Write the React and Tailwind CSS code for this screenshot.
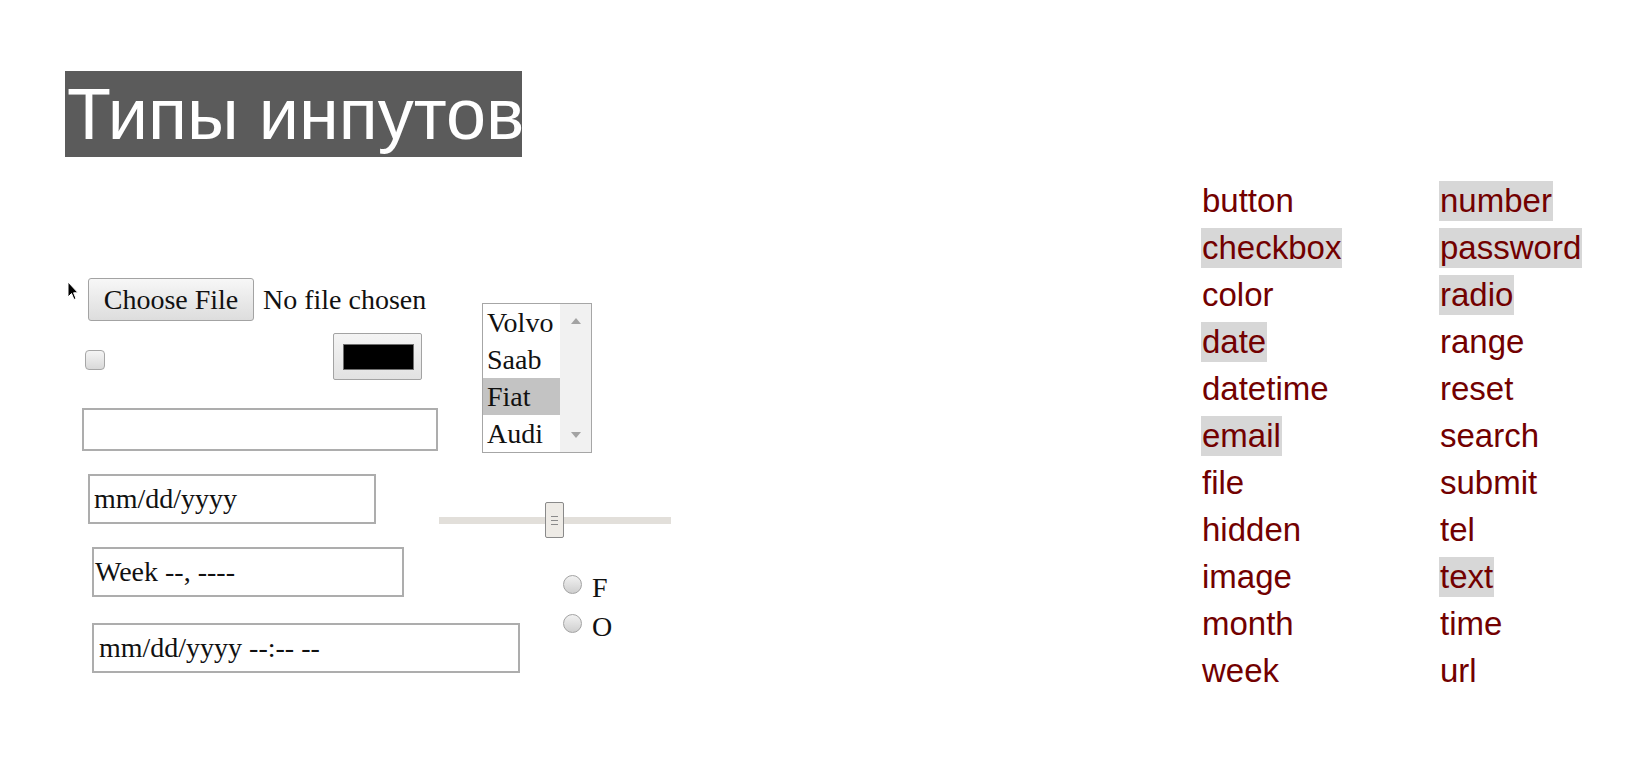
const serif = { fontFamily: '"Liberation Serif", "Times New Roman", serif' };

const leftTypes = [
  { name: "button" },
  { name: "checkbox", on: true },
  { name: "color" },
  { name: "date", on: true },
  { name: "datetime" },
  { name: "email", on: true },
  { name: "file" },
  { name: "hidden" },
  { name: "image" },
  { name: "month" },
  { name: "week" },
];

const rightTypes = [
  { name: "number", on: true },
  { name: "password", on: true },
  { name: "radio", on: true },
  { name: "range" },
  { name: "reset" },
  { name: "search" },
  { name: "submit" },
  { name: "tel" },
  { name: "text", on: true },
  { name: "time" },
  { name: "url" },
];

function TypeList({ items }) {
  return (
    <ul className="flex flex-col">
      {items.map((t) => (
        <li key={t.name} className="h-[47px]">
          <span
            className={
              "inline-block px-[1px] leading-[40px] " + (t.on ? "bg-[#d7d7d7]" : "")
            }
          >
            {t.name}
          </span>
        </li>
      ))}
    </ul>
  );
}

function Cursor() {
  return (
    <svg
      className="absolute left-[-15px] top-[3px]"
      width="12"
      height="20"
      viewBox="0 0 12 20"
    >
      <path
        d="M1 1 L1 16 L4.5 12.5 L7 18.5 L9 17.6 L6.6 11.8 L11 11.8 Z"
        fill="#000"
        stroke="#fff"
        strokeWidth="1"
      />
    </svg>
  );
}

function FakeDate({ text, className, pad = "pl-[4px]" }) {
  return (
    <div
      className={
        "flex items-center border-2 border-[#adadad] bg-white text-[28px] text-[#111] " +
        pad +
        " " +
        className
      }
      style={serif}
    >
      {text}
    </div>
  );
}

function Radio({ label }) {
  return (
    <div className="flex items-center h-[39px]">
      <span className="w-[19px] h-[19px] rounded-full border border-[#a3a3a3] bg-linear-to-b from-[#f2f2f2] to-[#cfcfcf]" />
      <span className="ml-[10px] text-[28px] text-[#111] leading-none pt-[6px]" style={serif}>
        {label}
      </span>
    </div>
  );
}

export default function App() {
  return (
    <div className="w-[1627px] h-[762px] bg-white overflow-hidden flex">
      {/* left: title + inputs */}
      <div className="w-[1201px] shrink-0 pt-[71px]">
        <div
          className="ml-[65px] w-[457px] h-[86px] bg-[#5b5b5b] text-white text-[72px] leading-[86px] pl-[2px] whitespace-nowrap"
          style={{ fontFamily: '"Liberation Sans", Arial, sans-serif' }}
        >
          Типы инпутов
        </div>

        {/* first block */}
        <div className="mt-[121px] flex items-start">
          <div className="ml-[82px] flex flex-col relative">
            <Cursor />
            <div className="flex items-center ml-[6px]">
              <button
                className="w-[166px] h-[43px] border border-[#a3a3a3] rounded-[3px] bg-linear-to-b from-[#f7f7f7] to-[#dddddd] text-[28px] text-[#111]"
                style={serif}
              >
                Choose File
              </button>
              <span className="ml-[9px] text-[28px] text-[#111]" style={serif}>
                No file chosen
              </span>
            </div>

            <div className="flex items-center mt-[12px]">
              <span className="ml-[3px] mt-[6px] w-[20px] h-[20px] rounded-[4px] border border-[#a6a6a6] bg-linear-to-b from-[#f5f5f5] to-[#d9d9d9]" />
              <div className="ml-[228px] w-[89px] h-[47px] border border-[#a3a3a3] rounded-[2px] bg-linear-to-b from-[#f4f4f4] to-[#e2e2e2] pl-[9px] pt-[10px]">
                <div className="w-[71px] h-[26px] bg-black border border-[#6f6f6f]" />
              </div>
            </div>

            <div className="mt-[28px] w-[356px] h-[43px] border-2 border-[#adadad] bg-white" />
          </div>

          {/* listbox */}
          <div
            className="ml-[44px] mt-[25px] w-[110px] h-[150px] border border-[#a6a6a6] flex text-[28px] text-[#111]"
            style={serif}
          >
            <div className="flex-1 flex flex-col">
              {["Volvo", "Saab", "Fiat", "Audi"].map((o) => (
                <div
                  key={o}
                  className={
                    "h-[37px] leading-[37px] pl-[4px] " + (o === "Fiat" ? "bg-[#c3c3c3]" : "")
                  }
                >
                  {o}
                </div>
              ))}
            </div>
            <div className="w-[31px] bg-[#f1f1f1] flex flex-col items-center justify-between py-[14px]">
              <svg width="10" height="6" viewBox="0 0 10 6">
                <path d="M0 6 L5 0 L10 6 Z" fill="#a3a3a3" />
              </svg>
              <svg width="10" height="6" viewBox="0 0 10 6">
                <path d="M0 0 L5 6 L10 0 Z" fill="#a3a3a3" />
              </svg>
            </div>
          </div>
        </div>

        {/* date + range */}
        <div className="mt-[21px] flex items-start">
          <FakeDate text="mm/dd/yyyy" className="ml-[88px] w-[288px] h-[50px]" />
          <div className="ml-[63px] w-[232px] h-[64px] flex items-center relative">
            <div className="w-full h-[7px] bg-[#e2dfda] mt-[28px]" />
            <div className="absolute left-[106px] top-[28px] w-[19px] h-[36px] border border-[#8a8a8a] rounded-[2px] bg-[#eeebe6] flex flex-col items-center justify-center gap-[3px]">
              <span className="w-[7px] h-[1px] bg-[#8a8a8a]" />
              <span className="w-[7px] h-[1px] bg-[#8a8a8a]" />
              <span className="w-[7px] h-[1px] bg-[#8a8a8a]" />
            </div>
          </div>
        </div>

        {/* week + datetime + radios */}
        <div className="mt-[9px] flex items-start">
          <div className="ml-[92px] flex flex-col">
            <FakeDate text="Week --, ----" pad="pl-[1px]" className="w-[312px] h-[50px]" />
            <FakeDate text="mm/dd/yyyy --:-- --" pad="pl-[5px]" className="mt-[26px] w-[428px] h-[50px]" />
          </div>
          <div className="ml-[43px] mt-[18px] flex flex-col">
            <Radio label="F" />
            <Radio label="O" />
          </div>
        </div>
      </div>

      {/* right: list of types */}
      <div
        className="pt-[176px] flex text-[33px] text-[#720000]"
        style={{ fontFamily: '"Liberation Sans", Arial, sans-serif' }}
      >
        <div className="w-[238px]">
          <TypeList items={leftTypes} />
        </div>
        <TypeList items={rightTypes} />
      </div>
    </div>
  );
}
